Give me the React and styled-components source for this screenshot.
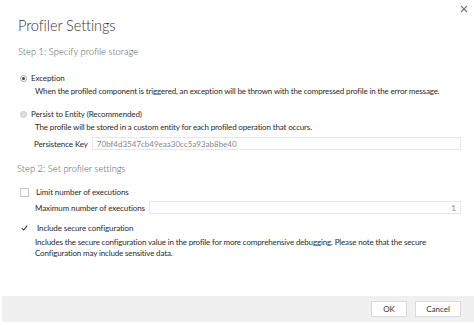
import React, { useState } from 'react'
import styled, { createGlobalStyle } from 'styled-components'

const GlobalStyle = createGlobalStyle`
    html, body {
        margin: 0;
        padding: 0;
        background: #ffffff;
    }
    body {
        font-family: Lato, "Noto Sans", sans-serif;
        color: #333;
    }
`

const Dialog = styled.div`
    width: 474px;
    height: 325px;
    display: flex;
    flex-direction: column;
    background: #fff;
    position: relative;
    overflow: hidden;
`

const Body = styled.div`
    flex: 1;
    padding: 15px 13px 0 18px;
`

const Title = styled.h1`
    margin: 0;
    font-size: 14.6px;
    font-weight: 300;
    letter-spacing: -0.1px;
    color: #333;
    line-height: 22px;
`

const Step = styled.h2`
    margin: ${p => p.top}px 0 0 ${p => p.left || 0}px;
    font-size: 9.4px;
    font-weight: 300;
    color: #555;
    line-height: 14px;
`

const CloseButton = styled.button`
    position: absolute;
    top: 2px;
    right: 3px;
    width: 14px;
    height: 14px;
    padding: 0;
    border: 0;
    background: none;
    display: flex;
    align-items: center;
    justify-content: center;
    cursor: pointer;
`

const Option = styled.div`
    margin-top: ${p => p.top}px;
`

const OptionRow = styled.label`
    display: flex;
    align-items: center;
    gap: ${p => p.gap}px;
    font-size: 8px;
    line-height: 12px;
    letter-spacing: -0.1px;
    color: #2a2a2a;
`

const Radio = styled.span`
    width: 5px;
    height: 5px;
    border-radius: 50%;
    background: ${p => (p.checked ? '#fff' : '#ddd')};
    border: 1px solid ${p => (p.checked ? '#aaa' : '#ccc')};
    display: flex;
    align-items: center;
    justify-content: center;
    margin-left: 2px;
    &::after {
        content: '';
        width: 3px;
        height: 3px;
        border-radius: 50%;
        background: ${p => (p.checked ? '#444' : 'transparent')};
    }
`

const Checkbox = styled.span`
    width: 7px;
    height: 7px;
    margin-left: 2px;
    border: 1px solid ${p => (p.checked ? 'transparent' : '#c4c4c4')};
    display: flex;
    align-items: center;
    justify-content: center;
`

const Desc = styled.div`
    margin: ${p => p.top || 1}px 0 0 17px;
    font-size: 8px;
    line-height: 11px;
    letter-spacing: -0.15px;
    color: #2a2a2a;
    white-space: nowrap;
`

const FieldRow = styled.div`
    display: flex;
    align-items: center;
    margin: ${p => p.top}px 0 0 ${p => p.left}px;
    gap: ${p => p.gap}px;
`

const FieldLabel = styled.span`
    font-size: 8px;
    letter-spacing: -0.1px;
    color: #2a2a2a;
    white-space: nowrap;
`

const TextInput = styled.input`
    flex: 1;
    height: 13px;
    box-sizing: border-box;
    border: 1px solid #e6e6e6;
    padding: 0 4px;
    font-family: inherit;
    font-size: 8px;
    color: #888;
    text-align: ${p => p.align || 'left'};
    outline: none;
`

const Footer = styled.div`
    height: 26px;
    margin: 0 0 3px 2px;
    background: #f0f0f0;
    display: flex;
    justify-content: flex-end;
    align-items: center;
    gap: 8px;
    padding-right: 13px;
`

const Button = styled.button`
    width: ${p => p.w}px;
    height: 16px;
    box-sizing: border-box;
    background: #fff;
    border: 1px solid #dadada;
    font-family: inherit;
    font-size: 8px;
    color: #333;
    padding: 0;
    cursor: pointer;
`

const App = () => {
    const [storage, setStorage] = useState('exception')
    const [limit, setLimit] = useState(false)
    const [secure, setSecure] = useState(true)

    return (
        <Dialog>
            <GlobalStyle />
            <CloseButton aria-label="Close">
                <svg width="8" height="8" viewBox="0 0 8 8">
                    <path d="M1 1 L7 7 M7 1 L1 7" stroke="#777" strokeWidth="1.1" />
                </svg>
            </CloseButton>
            <Body>
                <Title>Profiler Settings</Title>
                <Step top={8}>Step 1: Specify profile storage</Step>

                <Option top={13}>
                    <OptionRow gap={4} onClick={() => setStorage('exception')}>
                        <Radio checked={storage === 'exception'} />
                        Exception
                    </OptionRow>
                    <Desc top={2}>When the profiled component is triggered, an exception will be thrown with the compressed profile in the error message.</Desc>
                </Option>

                <Option top={11}>
                    <OptionRow gap={4} onClick={() => setStorage('entity')}>
                        <Radio checked={storage === 'entity'} />
                        Persist to Entity (Recommended)
                    </OptionRow>
                    <Desc top={2}>The profile will be stored in a custom entity for each profiled operation that occurs.</Desc>
                    <FieldRow top={4} left={16} gap={4}>
                        <FieldLabel>Persistence Key</FieldLabel>
                        <TextInput readOnly value="70bf4d3547cb49eaa30cc5a93ab8be40" />
                    </FieldRow>
                </Option>

                <Step top={12} left={-1}>Step 2: Set profiler settings</Step>

                <Option top={10}>
                    <OptionRow gap={7} onClick={() => setLimit(!limit)}>
                        <Checkbox checked={limit} />
                        Limit number of executions
                    </OptionRow>
                    <FieldRow top={3} left={17} gap={4}>
                        <FieldLabel>Maximum number of executions</FieldLabel>
                        <TextInput readOnly value="1" align="right" />
                    </FieldRow>
                </Option>

                <Option top={8}>
                    <OptionRow gap={8} onClick={() => setSecure(!secure)}>
                        <Checkbox checked={secure}>
                            <svg width="9" height="8" viewBox="0 0 9 8">
                                <path d="M1 4.2 L3.4 6.6 L8 1" fill="none" stroke="#333" strokeWidth="1.3" />
                            </svg>
                        </Checkbox>
                        Include secure configuration
                    </OptionRow>
                    <Desc top={3}>
                        Includes the secure configuration value in the profile for more comprehensive debugging. Please note that the secure
                        <br />
                        Configuration may include sensitive data.
                    </Desc>
                </Option>
            </Body>
            <Footer>
                <Button w={36}>OK</Button>
                <Button w={46}>Cancel</Button>
            </Footer>
        </Dialog>
    )
}

export default App
